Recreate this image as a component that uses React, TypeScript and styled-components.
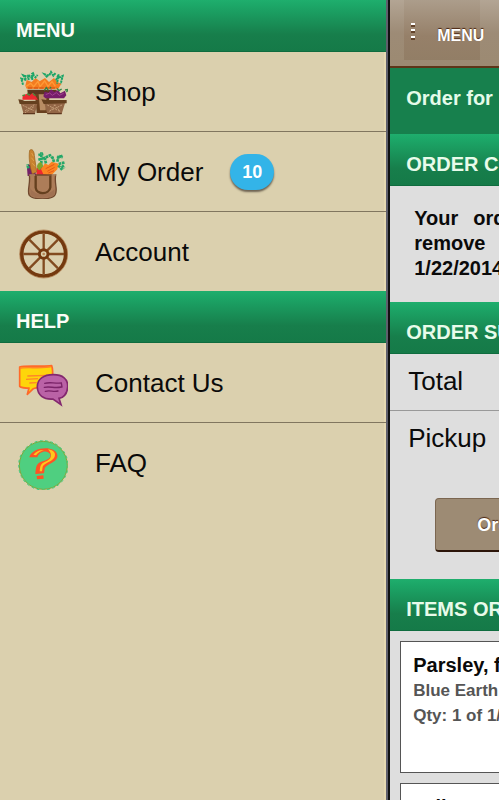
import React from "react";
import styled, { createGlobalStyle } from "styled-components";

const GlobalStyle = createGlobalStyle`
  *, *::before, *::after { box-sizing: border-box; }
  html, body { margin: 0; padding: 0; }
  body { font-family: "Liberation Sans", Arial, sans-serif; color: #0a0a0a; overflow: hidden; }
  button { font-family: inherit; cursor: pointer; }
  p, h1, h2, h3, ul, dl, dd, dt { margin: 0; padding: 0; }
`;

const Layout = styled.div`
  display: flex;
  height: 100vh;
  overflow: hidden;
`;

const Drawer = styled.nav`
  flex: 0 0 calc(78% + 1px);
  background: #dbd0ae;
  border-right: 2px solid #111;
  box-shadow: inset -2px 0 0 #5f5f6c, inset -4px 0 0 #e6d9b2;
`;

const BandHeading = styled.h2`
  display: flex;
  align-items: center;
  min-height: 52px;
  padding: 8px 16px 0;
  font-size: 20px;
  line-height: 24px;
  font-weight: 700;
  color: #e8fbea;
  white-space: nowrap;
  background: linear-gradient(#1fae6d 0%, #1ca667 12%, #177e4b 68%, #157a48 100%);
  border-bottom: 1px solid #0f6c3f;
`;

const DrawerHeading = styled(BandHeading)`
  margin-right: 2px;
  color: #fbfdf8;
`;

const MenuList = styled.ul`
  list-style: none;
  margin-right: 2px;
`;

const MenuItem = styled.li`
  & + & { border-top: 1px solid #81765f; }
`;

const MenuLink = styled.a`
  display: flex;
  align-items: center;
  min-height: 79px;
  padding: 0 18px;
  font-size: 26px;
  line-height: 32px;
  color: #0a0a0a;
  text-decoration: none;
  white-space: nowrap;

  svg { width: 50px; height: 50px; margin: 4px 27px 0 0; flex: none; }
`;

const Badge = styled.span`
  min-width: 44px;
  margin-left: 27px;
  padding: 0 12px;
  border-radius: 18px;
  font-size: 18px;
  line-height: 36px;
  font-weight: 700;
  text-align: center;
  color: #fff;
  background: #33b4e8;
  box-shadow: 0 2px 2px #6d6252;
`;

const Page = styled.main`
  flex: 0 0 100%;
  background: #dedede;
`;

const Toolbar = styled.header`
  display: flex;
  align-items: flex-start;
  height: 68px;
  padding-left: 14px;
  background: linear-gradient(#b3a594 0%, #9d8b76 50%, #9c8a72 100%);
  border-bottom: 2px solid #5e3519;
`;

const ToolbarButton = styled.button`
  display: flex;
  align-items: center;
  gap: 16px;
  height: 60px;
  padding: 12px 0 0 5px;
  width: 76px;
  border: 0;
  font-size: 16px;
  line-height: 20px;
  font-weight: 700;
  color: #fff;
  text-shadow: 0 -1px 1px #4a2410;
  background: linear-gradient(#ac9d8b 0%, #968069 60%, #927e66 100%);
  overflow: visible;

  svg { flex: none; margin-bottom: 8px; }
`;

const OrderFor = styled.p`
  padding: 18px 16px 24px;
  font-size: 20px;
  line-height: 24px;
  font-weight: 700;
  color: #e5fbe9;
  background: #17804d;
`;

const Notice = styled.p`
  padding: 20px 24px 21px;
  font-size: 20px;
  line-height: 25px;
  font-weight: 700;
`;

const NoticeLine = styled.span<{ $last?: boolean }>`
  display: block;
  text-align: justify;
  text-align-last: ${(p) => (p.$last ? "left" : "justify")};
`;

const SummaryRow = styled.p`
  min-height: 56px;
  padding: 11px 18px;
  font-size: 26px;
  line-height: 32px;
  & + & { border-top: 1px solid #999; min-height: 68px; }
`;

const ActionBar = styled.div`
  display: flex;
  padding: 20px 45px 27px;
`;

const ActionButton = styled.button`
  min-width: 180px;
  height: 54px;
  padding: 0 41px;
  border: 1px solid #7b6650;
  border-bottom: 2px solid #2c1509;
  border-radius: 4px;
  font-size: 18px;
  line-height: 24px;
  font-weight: 700;
  text-align: left;
  color: #fff;
  text-shadow: 0 -1px 1px #4a2410;
  background: #9d8b74;
`;

const Items = styled.div`
  display: flex;
  flex-direction: column;
  gap: 10px;
  padding: 10px;
`;

const ItemCard = styled.article`
  min-height: 132px;
  padding: 10px 12px;
  background: #fff;
  border: 1px solid #555;
  font-size: 17px;
  line-height: 25px;
  font-weight: 700;
  color: #555;
`;

const ItemName = styled.h3`
  font-size: 20px;
  line-height: 26px;
  color: #0a0a0a;
`;

const ShopIcon = () => (
  <svg viewBox="0 0 150 150" aria-hidden="true">
    <path d="M28 62h88v22l-22 2-4 46H56l-4-44-22-5z" fill="#69401f" />
    <path d="M62 76h24l-3 48H66z" fill="#b98d64" />
    <path d="M29 64h84l-5 11H32z" fill="#5c371f" />
    <path d="M22 50l4-17 15 6 12-12 12 10 16-10 12 12 15-12 10 12 12 5-9 15H26z" fill="#f47c20" />
    <path d="M24 52l14-9 9 10 13-16 6 16 14-17 10 16 12-14 10 14" fill="none" stroke="#ff9a36" strokeWidth="4" />
    <path d="M30 57h86" stroke="#dc5b13" strokeWidth="4" strokeDasharray="13 4" />
    <g fill="none" stroke="#1ba567" strokeWidth="6" strokeDasharray="7 2">
      <path d="M15 47l-5-18 15 4-9-14 15 5M32 33l-2-16 10 9 9-10M43 33l-1-18 7-5M50 27l9-9M88 25l-8-9 13 4 6-11 7 11 7-8M114 34l8-18-5 28M122 26l12-5-6 24" />
    </g>
    <path d="M76 82l4-14 12 3 7-10 10 8 12-6 6 10 14-8 4 14-7 9H82z" fill="#761d6a" />
    <path d="M83 77l12-5 8 7 12-8 9 8 13-6" fill="none" stroke="#a1438f" strokeWidth="3" />
    <path d="M79 64l6-8 6 8M95 59l4-5M117 58l6 7 8-5M141 63l12-2-8 8" fill="none" stroke="#338346" strokeWidth="4" />
    <path d="M13 92l1-10 11-8 9 6 10-9 8 9 8 12z" fill="#ed2930" />
    <path d="M13 80l8-2M27 75l9 3M44 73l8 7" stroke="#4f873b" strokeWidth="4" />
    <path d="M7 100l52-1-8 35-34 1z" fill="#936646" />
    <path d="M78 99h64l-11 36H88z" fill="#936646" />
    <path d="M1 91l10 1 9 4 40-1v10H5z" fill="#65401f" />
    <path d="M70 91l15 2h61v10l-69 2z" fill="#65401f" />
    <g fill="none" stroke="#c49e78" strokeWidth="3" strokeDasharray="6 3">
      <path d="M14 109l34 16M49 107l-30 20M20 132l28-19M88 108l39 20M132 108l-39 19M111 107l-18 23M109 107l18 21" />
    </g>
    <path d="M15 134h36M88 134h43" stroke="#5d371f" strokeWidth="4" />
  </svg>
);

const BagIcon = () => (
  <svg viewBox="0 0 150 150" aria-hidden="true">
    <path d="M27 58l4-13 14 7 11 29H29z" fill="#742067" />
    <path d="M55 79l1-22 15-5 14 13 17-1 1 15z" fill="#ed2930" />
    <path d="M69 60l12-17 10 5 10-10 21 6-4 17-19 19-23-4z" fill="#fb8522" />
    <path d="M83 59l26-13M88 67l22-12M91 72l17-7" stroke="#e75815" strokeWidth="3" />
    <g fill="none" stroke="#24a768" strokeWidth="8" strokeDasharray="8 2">
      <path d="M70 54V10M61 18l15-3M61 32l21-6M84 43l-4-16 16-8 10 11M108 39l-5-16M118 38l4-18 12 6M117 27l17-7M122 45l19-5M121 49l12 14M132 49l7 9M31 58l-3-12" />
    </g>
    <path d="M61 62c-8-11-3-18 7-24l7 12-9 13z" fill="#82a52b" />
    <path d="M35 4c8-7 14 4 14 15l7 50-13 6C36 56 31 25 35 4z" fill="#c9832f" stroke="#99601c" strokeWidth="2" />
    <path d="M41 12l5 10M40 26l8 10M43 43l8 9" stroke="#dfa04c" strokeWidth="3" />
    <path d="M34 78h79c-5 28 8 44-2 60-8 15-66 15-77 1-8-13 4-33 0-61z" fill="#ad7d59" stroke="#70482e" strokeWidth="4" />
    <path d="M37 116c8 23 56 26 72 4l1 17c-15 12-61 12-73 0z" fill="#a07152" />
    <path d="M53 80v36c2 22 41 22 44-1V80" fill="none" stroke="#65401f" strokeWidth="7" />
    <path d="M34 78h17M101 78h12" stroke="#d1a980" strokeWidth="3" />
  </svg>
);

const WheelIcon = () => (
  <svg viewBox="0 0 150 150" aria-hidden="true">
    <circle cx="77" cy="75" r="66" fill="none" stroke="#74390f" strokeWidth="11" />
    <circle cx="77" cy="75" r="72" fill="none" stroke="#a8703f" strokeWidth="2" />
    <g stroke="#824b20" strokeWidth="7">
      <path d="M77 15v48M77 87v48M16 75h49M89 75h49M34 32l35 35M85 83l35 35M120 32L85 67M69 83l-35 35" />
    </g>
    <circle cx="77" cy="75" r="13" fill="#dbd0ae" stroke="#74390f" strokeWidth="9" />
    <circle cx="77" cy="75" r="4" fill="#b58557" />
  </svg>
);

const ChatIcon = () => (
  <svg viewBox="0 0 150 150" aria-hidden="true">
    <path d="M5 21c17-6 69 0 96-4 6 15 2 41 2 62-22 4-47 3-57 7L28 103l5-19c-13 1-26-2-28-5z" fill="#fed50a" stroke="#ff6a29" strokeWidth="5" strokeLinejoin="round" />
    <path d="M5 25c11-5 77 2 94-5M28 48l60-2M24 58l36-2M34 69l22-1" fill="none" stroke="#ff8529" strokeWidth="4" />
    <path d="M106 44c28 0 44 13 43 36-1 24-15 34-26 35l6 19-24-17c-29 2-46-12-47-35-1-25 19-38 48-38z" fill="#ba62a6" stroke="#83286f" strokeWidth="5" />
    <path d="M80 70c14-4 25 0 50-1l2 12M79 82c18-4 31 4 51-1M82 94c15-4 24 3 38-1" fill="none" stroke="#7a2368" strokeWidth="4" strokeLinecap="round" />
  </svg>
);

const FaqIcon = () => (
  <svg viewBox="0 0 150 150" aria-hidden="true">
    <circle cx="76" cy="76" r="72" fill="#4fcf80" stroke="#7ea638" strokeWidth="3" />
    <circle cx="76" cy="76" r="74" fill="none" stroke="#36cd80" strokeWidth="3" strokeDasharray="8 8" />
    <path d="M34 52C40 20 112 14 118 44c4 24-34 26-38 42l-2 14-26 2c2-22 2-32 22-38 22-6 26-16 22-22-8-14-34-8-38 10z" fill="#ff5324" />
    <path d="M46 44c10-12 22-16 32-12-10 0-18 6-24 14zM90 28c18 2 26 14 18 26-8 12-28 14-34 26l-2 14h-7c2-16 2-22 15-28 20-6 26-22 10-38z" fill="#ffc71c" />
    <path d="M56 108l20-2 1 10-20 2z" fill="#ff5324" />
  </svg>
);

const DotsIcon = () => (
  <svg width="12" height="20" viewBox="0 0 12 20" aria-hidden="true">
    <path d="M2 4h4M2 10h4M2 17h4" stroke="#63432b" strokeWidth="2" />
    <path d="M2 2h4M2 8h4M2 15h4" stroke="#fff" strokeWidth="2" />
  </svg>
);

type Entry = { label: string; Icon: () => React.JSX.Element; count?: number };

const groups: { title: string; entries: Entry[] }[] = [
  {
    title: "MENU",
    entries: [
      { label: "Shop", Icon: ShopIcon },
      { label: "My Order", Icon: BagIcon, count: 10 },
      { label: "Account", Icon: WheelIcon },
    ],
  },
  {
    title: "HELP",
    entries: [
      { label: "Contact Us", Icon: ChatIcon },
      { label: "FAQ", Icon: FaqIcon },
    ],
  },
];

export default function App() {
  return (
    <>
      <GlobalStyle />
      <Layout>
        <Drawer aria-label="Main menu">
          {groups.map((group) => (
            <section key={group.title}>
              <DrawerHeading>{group.title}</DrawerHeading>
              <MenuList>
                {group.entries.map(({ label, Icon, count }) => (
                  <MenuItem key={label}>
                    <MenuLink href="#">
                      <Icon />
                      {label}
                      {count && <Badge>{count}</Badge>}
                    </MenuLink>
                  </MenuItem>
                ))}
              </MenuList>
            </section>
          ))}
        </Drawer>
        <Page>
          <Toolbar>
            <ToolbarButton type="button">
              <DotsIcon />
              MENU
            </ToolbarButton>
          </Toolbar>
          <OrderFor>Order for</OrderFor>
          <BandHeading>ORDER CONFIRMED</BandHeading>
          <Notice>
            <NoticeLine>Your order is open. You can now add or</NoticeLine>
            <NoticeLine>remove items from it at any time until</NoticeLine>
            <NoticeLine $last>1/22/2014.</NoticeLine>
          </Notice>
          <BandHeading>ORDER SUMMARY</BandHeading>
          <SummaryRow>Total</SummaryRow>
          <SummaryRow>Pickup</SummaryRow>
          <ActionBar>
            <ActionButton type="button">Order</ActionButton>
          </ActionBar>
          <BandHeading>ITEMS ORDERED</BandHeading>
          <Items>
            <ItemCard>
              <ItemName>Parsley, flat</ItemName>
              <p>Blue Earth</p>
              <p>Qty: 1 of 1/</p>
            </ItemCard>
            <ItemCard>
              <ItemName>Jelly - Pepper</ItemName>
            </ItemCard>
          </Items>
        </Page>
      </Layout>
    </>
  );
}
